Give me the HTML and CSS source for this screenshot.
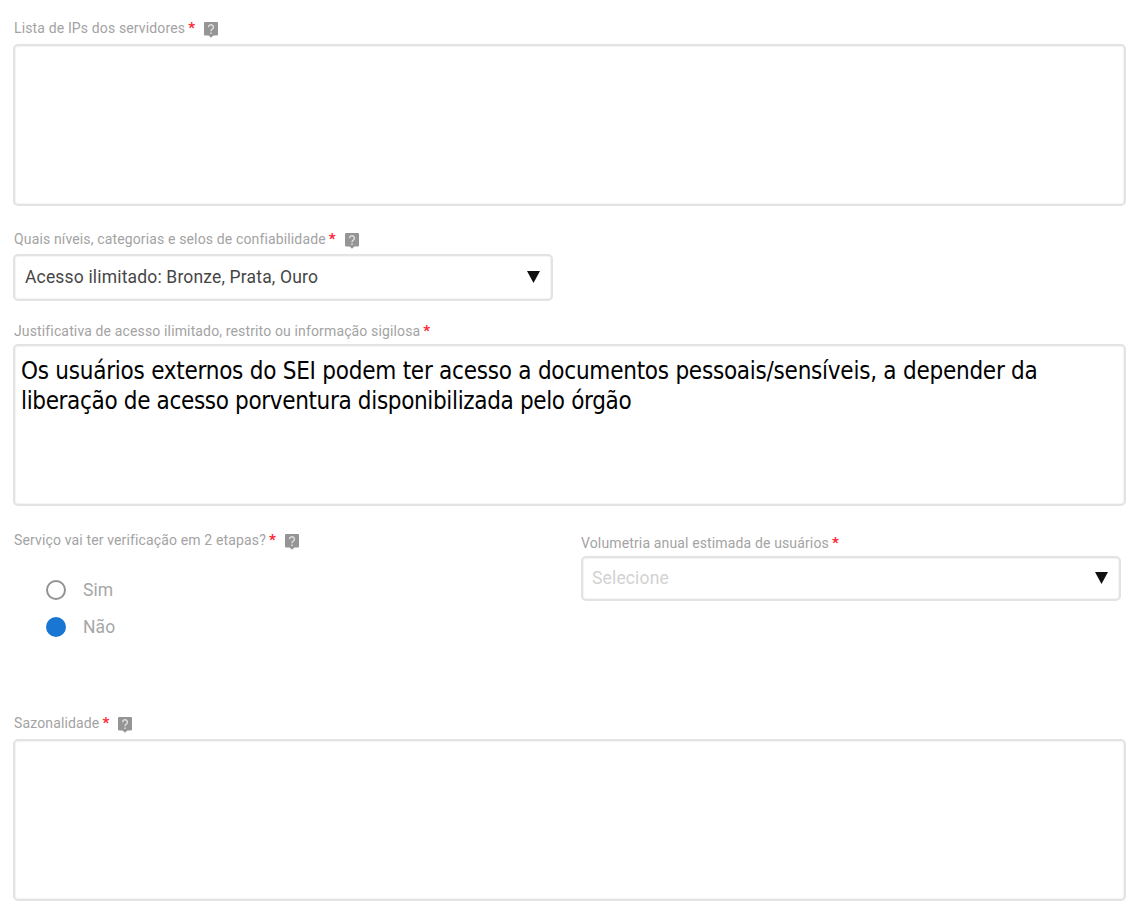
FILE: index.html
```html
<!DOCTYPE html>
<html lang="pt-BR">
<head>
<meta charset="utf-8">
<title>Formulário</title>
<link rel="stylesheet" href="styles.css">
</head>
<body>
<svg class="defs" width="0" height="0">
  <symbol id="help" viewBox="0 0 14 16">
    <path d="M1 0h12a1 1 0 0 1 1 1v11.500a1 1 0 0 1-1 1H9.300L7 15.800 4.700 13.500H1a1 1 0 0 1-1-1V1a1 1 0 0 1 1-1z" fill="#959595"/>
    <path d="M4.600 5.200a2.400 2.300 0 1 1 3.900 1.700C7.600 7.600 7 8 7 9.300M7 10.500v1.500" fill="none" stroke="#dedede" stroke-width="1.500"/>
  </symbol>
</svg>
<main class="form">
  <section class="field field-ips">
    <div class="label"><span>Lista de IPs dos servidores</span><i class="req">*</i><svg class="help"><use href="#help"/></svg></div>
    <div class="box area"></div>
  </section>
  <section class="field field-levels">
    <div class="label"><span>Quais níveis, categorias e selos de confiabilidade</span><i class="req">*</i><svg class="help"><use href="#help"/></svg></div>
    <div class="box select"><span class="value">Acesso ilimitado: Bronze, Prata, Ouro</span><svg class="arrow" viewBox="0 0 13 12"><path d="M0 0h13L6.500 12z"/></svg></div>
  </section>
  <section class="field field-reason">
    <div class="label"><span>Justificativa de acesso ilimitado, restrito ou informação sigilosa</span><i class="req">*</i></div>
    <div class="box area area-text"><p class="line">Os usuários externos do SEI podem ter acesso a documentos pessoais/sensíveis, a depender da</p><p class="line line-last">liberação de acesso porventura disponibilizada pelo órgão</p></div>
  </section>
  <div class="columns">
    <section class="steps">
      <div class="label"><span>Serviço vai ter verificação em 2 etapas?</span><i class="req">*</i><svg class="help"><use href="#help"/></svg></div>
      <div class="options">
        <div class="option"><span class="radio"></span><span>Sim</span></div>
        <div class="option"><span class="radio checked"></span><span>Não</span></div>
      </div>
    </section>
    <section class="volume">
      <div class="label"><span>Volumetria anual estimada de usuários</span><i class="req">*</i></div>
      <div class="box select select-volume"><span class="placeholder">Selecione</span><svg class="arrow" viewBox="0 0 13 12"><path d="M0 0h13L6.500 12z"/></svg></div>
    </section>
  </div>
  <section class="field">
    <div class="label"><span>Sazonalidade</span><i class="req">*</i><svg class="help"><use href="#help"/></svg></div>
    <div class="box area"></div>
  </section>
</main>
</body>
</html>
```
FILE: styles.css
```css
* { box-sizing: border-box; }
body { margin: 0; background: #fff; font-family: Roboto, "Liberation Sans", sans-serif; }
.defs { display: block; }
.form { width: 1134px; height: 912px; padding: 18px 8px 0 13px; overflow: hidden; }
.label { display: flex; align-items: center; height: 20px; padding-left: 1px; font-size: 14px; line-height: 20px; letter-spacing: .14px; color: #a3a3a3; white-space: nowrap; }
.req { margin-left: 3px; width: 7px; font-style: normal; font-weight: 700; font-size: 15px; color: #ff2634; }
.help { width: 14px; height: 16px; margin: 3px 0 0 9px; }
.box { border: 2px solid #e3e3e3; border-radius: 5px; box-shadow: inset 0 0 0 1px #f4f4f4; }
.area { height: 162px; margin-top: 6px; }
.area-text { margin-top: 3px; padding: 10px 6px; }
.field-ips { height: 211px; }
.field-levels { height: 92px; }
.field-reason { height: 209px; }
.select { display: flex; align-items: center; justify-content: space-between; width: 540px; height: 47px; margin-top: 5px; padding: 0 11px 2px 10px; }
.value { font-size: 17.5px; letter-spacing: .17px; color: #464646; }
.arrow { width: 13px; height: 12px; fill: #111; }
.line { margin: 0; font-family: "DejaVu Sans Condensed", "DejaVu Sans", sans-serif; font-stretch: condensed; font-size: 24px; line-height: 30px; letter-spacing: -.25px; color: #000; white-space: nowrap; }
.line-last { letter-spacing: -.35px; }
.columns { display: flex; height: 183px; }
.steps { width: 568px; }
.volume { padding-top: 3px; }
.volume .label { padding-left: 0; }
.select-volume { height: 45px; margin-top: 3px; padding-left: 9px; }
.placeholder { font-size: 17.5px; letter-spacing: .15px; color: #d2d2d2; }
.options { padding: 21px 0 0 33px; }
.option { display: flex; align-items: center; gap: 17px; height: 37px; font-size: 17.5px; letter-spacing: .1px; color: #a6a6a6; }
.radio { width: 20px; height: 20px; border: 2px solid #929292; border-radius: 50%; }
.checked { border-color: #1976d2; background: #1976d2; }
```
